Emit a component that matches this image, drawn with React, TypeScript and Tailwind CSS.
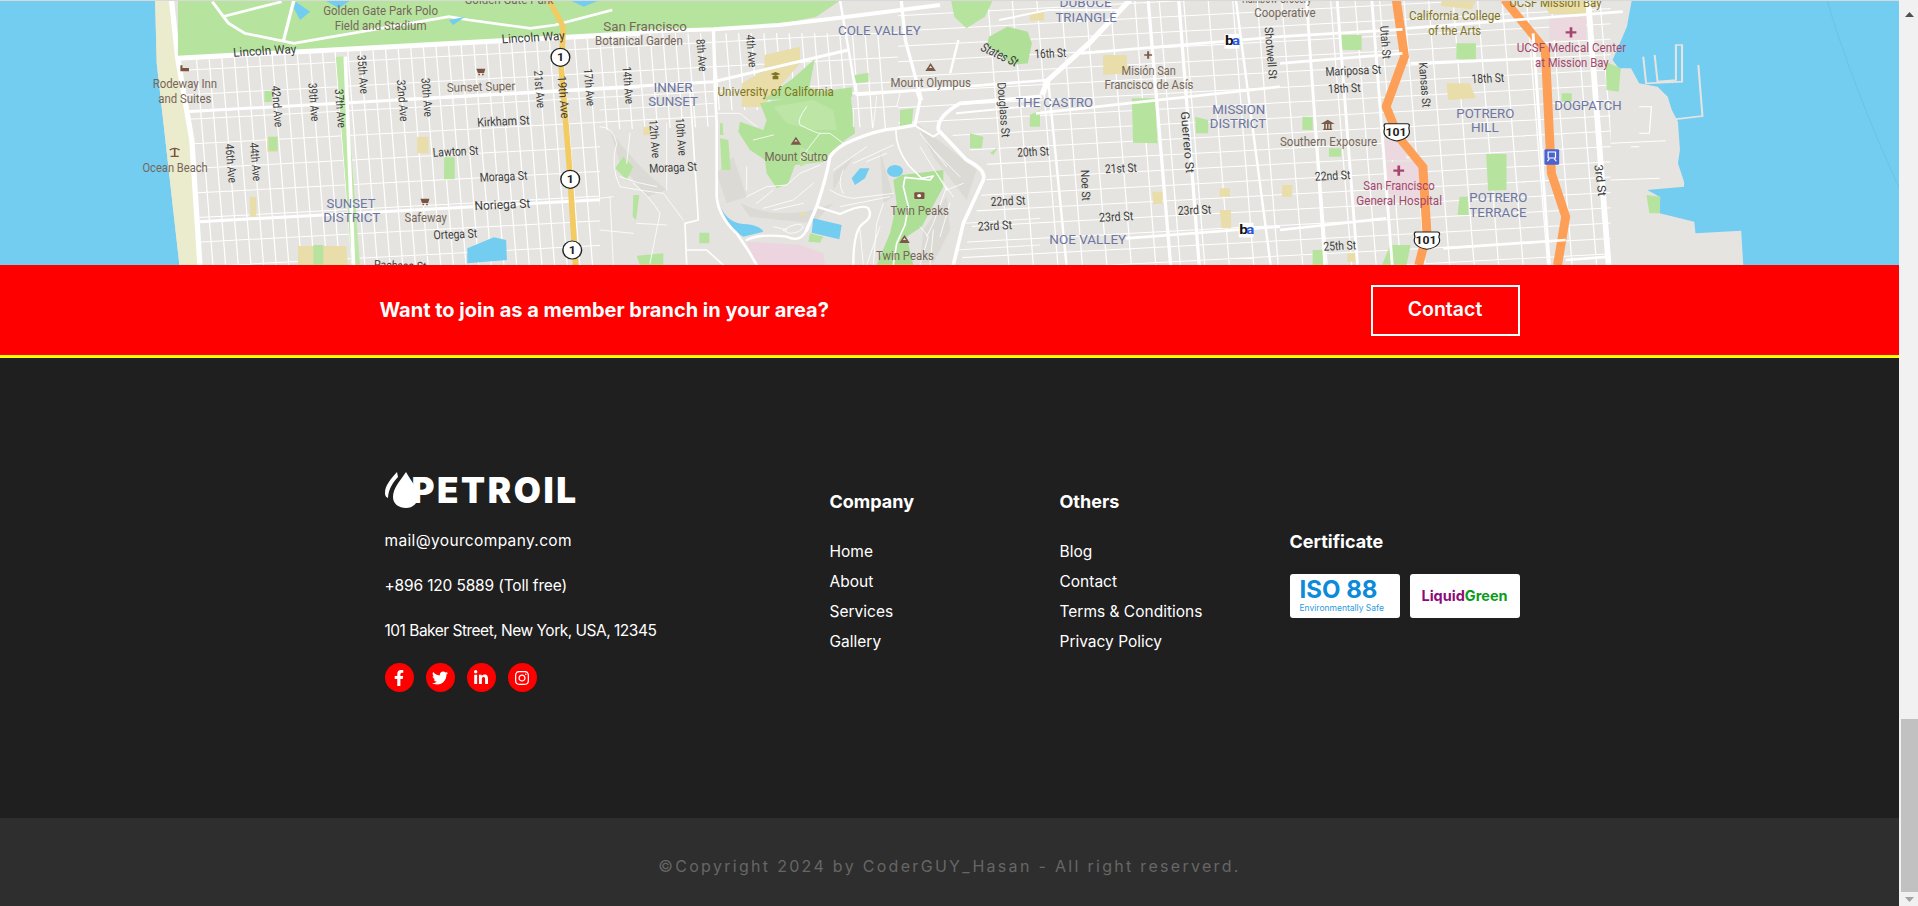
import React from "react";
import { FaFacebookF, FaTwitter, FaLinkedinIn, FaInstagram } from "react-icons/fa";

type L = [string, number, number, number, number?];
const BROWN = "#76675a", DARK = "#3c3c3c", BLUE = "#6d76a3", OLIVE = "#7f7420", MAROON = "#a4476f";
const MAPFONT = "'Liberation Sans Narrow','Roboto',sans-serif";

const g1: Record<string, L[]> = {
  [BROWN]: [["Golden Gate Park Polo",792,46,281],["Field and Stadium",820,89,225],["Golden Gate Park",1138,12,218],["Rodeway Inn",374,265,158],["and Suites",388,308,130],["Ocean Beach",349,515,160],["Sunset Super",1095,276,168,-2],["Safeway",991,666,104],["San Francisco",1478,92,205],["Botanical Garden",1458,135,215]],
  [DARK]: [["Lincoln Way",572,170,155,-4],["Lincoln Way",1230,130,155,-4],["Kirkham St",1170,380,128,-3],["Lawton St",1061,470,112,-3],["Moraga St",1176,545,117,-3],["Noriega St",1163,630,137,-3],["Ortega St",1063,718,107,-3],["Pacheco St",916,806,128,3],["42nd Ave",665,258,124,86],["39th Ave",755,250,115,86],["37th Ave",820,268,116,86],["35th Ave",875,166,116,86],["32nd Ave",972,240,125,86],["30th Ave",1032,235,116,86],["21st Ave",1308,212,113,86],["19th Ave",1366,228,128,86],["17th Ave",1430,206,113,86],["14th Ave",1525,200,113,86],["46th Ave",552,432,118,86],["44th Ave",612,428,116,86]],
  [BLUE]: [["SUNSET",800,624,120],["DISTRICT",792,667,140]],
};
const g2: Record<string, L[]> = {
  [BROWN]: [["Mount Olympus",614,262,197],["Mount Sutro",305,482,155],["Twin Peaks",614,644,143],["Twin Peaks",578,780,142],["Misión San",1180,224,133],["Francisco de Asís",1138,267,218],["Rainbow Grocery",1475,10,170],["Cooperative",1505,50,150]],
  [DARK]: [["States St",832,150,100,30],["16th St",967,175,78,-3],["Douglass St",875,248,165,86],["8th Ave",138,118,97,86],["4th Ave",260,105,98,86],["12th Ave",22,360,115,86],["10th Ave",87,355,113,86],["Moraga St",23,518,117,-3],["20th St",925,470,78,-3],["21st St",1140,520,78,-3],["22nd St",860,618,85,-3],["23rd St",828,692,84,-3],["23rd St",1125,665,84,-3],["23rd St",1318,645,82,-3],["Noe St",1080,510,93,88],["Guerrero St",1325,335,185,86],["Shotwell St",1530,82,157,86]],
  [BLUE]: [["COLE VALLEY",485,104,203],["DUBOCE",1028,22,128],["TRIANGLE",1018,66,150],["INNER",33,275,96],["SUNSET",20,317,122],["THE CASTRO",920,322,190],["MISSION",1402,342,130],["DISTRICT",1396,385,138],["NOE VALLEY",1003,733,188]],
  [OLIVE]: [["University of California",190,288,285]],
};
const g3: Record<string, L[]> = {
  [BROWN]: [["Southern Exposure",0,438,238]],
  [DARK]: [["Utah St",245,78,100,86],["Kansas St",340,188,135,86],["Mariposa St",112,228,137,-3],["18th St",118,280,80,-3],["18th St",470,250,80,-3],["22nd St",86,542,87,-3],["3rd St",770,495,95,84],["25th St",107,752,80,-3]],
  [BLUE]: [["POTRERO",432,354,142],["HILL",468,397,68],["DOGPATCH",672,329,165],["POTRERO",464,607,142],["TERRACE",464,650,140]],
  [OLIVE]: [["California College",316,60,224],["of the Arts",363,104,130],["UCSF Mission Bay",562,20,226]],
  [MAROON]: [["UCSF Medical Center",580,156,268],["at Mission Bay",625,200,180],["San Francisco",204,570,175],["General Hospital",187,614,210]],
};

function Labels({ data }: { data: Record<string, L[]> }) {
  return (
    <>
      {Object.entries(data).flatMap(([c, items]) =>
        items.map(([t, x, y, w, r], i) => (
          <text key={c + i} x={x} y={y} fill={c} fontSize={r && Math.abs(r) > 45 ? 29 : 37} textLength={w} lengthAdjust="spacingAndGlyphs" transform={r ? `rotate(${r} ${x} ${y})` : undefined} style={{ fontFamily: MAPFONT }}>
            {t}
          </text>
        ))
      )}
    </>
  );
}

function Route1({ x, y }: { x: number; y: number }) {
  return (
    <g>
      <ellipse cx={x} cy={y} rx={23} ry={27} fill="#fff" stroke="#222" strokeWidth={3.5} />
      <text x={x} y={y + 11} textAnchor="middle" fontSize={30} fontWeight={700} fill="#222" style={{ fontFamily: MAPFONT }}>1</text>
    </g>
  );
}
function Shield({ x, y }: { x: number; y: number }) {
  return (
    <g>
      <path d={`M${x - 28} ${y - 26} h56 q5 0 5 6 q-3 8 0 16 q2 22 -31 30 q-33 -8 -31 -30 q3 -8 0 -16 q0 -6 5 -6z`} fill="#fff" stroke="#222" strokeWidth={3} />
      <text x={x} y={y + 11} textAnchor="middle" fontSize={30} fontWeight={700} fill="#222" style={{ fontFamily: MAPFONT }}>101</text>
    </g>
  );
}
function Bart({ x, y }: { x: number; y: number }) {
  return (
    <g>
      <rect x={x - 18} y={y - 22} width={36} height={44} fill="#fff" />
      <text x={x - 17} y={y + 12} fontSize={38} fontWeight={700} fill="#111" style={{ fontFamily: MAPFONT }}>b</text>
      <text x={x} y={y + 12} fontSize={38} fontWeight={700} fill="#2f56d8" style={{ fontFamily: MAPFONT }}>a</text>
    </g>
  );
}
const Cross = ({ x, y, c, s = 1 }: { x: number; y: number; c: string; s?: number }) => (
  <path d={`M${x - 12 * s} ${y}h${24 * s}M${x} ${y - 14 * s}v${28 * s}`} stroke={c} strokeWidth={6 * s} fill="none" />
);
const Peak = ({ x, y }: { x: number; y: number }) => (
  <g>
    <path d={`M${x} ${y - 13}l13 24h-26z`} fill="#7b5a48" />
    <path d={`M${x} ${y - 4}l4 6-4-1-4 1z`} fill="#fff" />
  </g>
);
const Cart = ({ x, y }: { x: number; y: number }) => (
  <path d={`M${x - 11} ${y - 9}h22l-3 13h-15zM${x - 6} ${y + 6}h4v5h-4zM${x + 3} ${y + 6}h4v5h-4z`} fill="#7b5340" />
);

const hLines = (x0: number, x1: number, y0: number, y1: number, step: number) => {
  const out: string[] = [];
  for (let b = y0; b < y1; b += step) out.push(`M${x0} ${b - 0.065 * x0}L${x1} ${b - 0.065 * x1}`);
  return out.join("");
};
const vLines = (x0: number, x1: number, yt: number, yb: number, step: number) => {
  const out: string[] = [];
  for (let a = x0; a < x1; a += step) out.push(`M${a + 0.065 * yt} ${yt}L${a + 0.065 * yb} ${yb}`);
  return out.join("");
};

function Hills() {
  return (
    <g transform="translate(600 90) scale(0.33333)" fill="none" strokeLinejoin="round" strokeLinecap="round">
      <path d="M0 120L340 110L350 60L480 60L760 110L880 120L950 110L1050 130L1170 230L1080 525L0 525Z" fill="#e4e3df" />
      <path d="M420 340Q550 400 700 340L640 400L450 380Z M30 120Q100 220 200 300L140 320L60 220Z M350 250L380 340L440 320L400 200Z M950 100L1130 240L1100 330L1000 200Z M700 250L760 200L700 300Z M840 180L880 320L850 340Z M970 420L1040 320L1050 420L1000 520H960Z" fill="#dcdad5" />
      <path d="M480 40L690 0H750L765 130L735 150L690 190L670 215L585 225L565 280L530 295L500 250L495 210L450 180L415 125L420 95L490 120L500 90Z" fill="#b2e199" />
      <path d="M520 50L640 30L700 60L710 120L640 120L560 100Z M600 230L670 200L600 170Z" fill="#bde6a6" />
      <path d="M360 145L385 150L392 240L365 240Z M45 235L70 200L100 230L80 270Z M100 315L118 315L108 390L98 380Z M298 428H328V460H298Z M110 497L190 490V525H120Z M900 60L940 55L935 105L900 115Z M1110 130L1150 140L1145 175L1110 175Z M1170 190L1195 170L1180 195Z M630 430L670 440L660 458L625 455Z M360 100L368 100L370 135L360 135Z" fill="#b6e49f" />
      <path d="M880 270L905 255L1030 240L1030 290L965 410L920 440L940 525H830L870 430L890 340Z" fill="#aedf96" />
      <path d="M425 25H478V50H425Z M600 365L620 372L615 378L600 375Z M130 110H150V135H130Z" fill="#e9dda9" />
      <path d="M362 352Q385 400 430 402Q480 405 490 425L430 440Q390 420 362 352Z M640 385L725 405L718 448L635 428Z M755 265L780 235L808 235L795 265L765 285Z" fill="#72cdf1" />
      <ellipse cx="885" cy="243" rx="24" ry="18" fill="#72cdf1" />
      <path d="M440 455L600 465L670 490L675 525H470Z" fill="#ecd5df" />

      <g stroke="#fff" strokeWidth={2.5}>
        <path d="M0 110Q40 110 50 160Q30 230 60 290Q110 300 190 310L250 390M0 325L40 320M60 260Q110 280 170 290M100 280Q150 320 180 370L150 520M0 420L100 430M30 320L40 525M110 400L200 405M200 100L200 300M90 130L80 220" />
        <path d="M0 60L340 40M350 70L420 70L470 110" />
        <path d="M620 50Q590 90 600 105Q650 130 660 130H690L730 160M660 130Q620 180 600 210M460 150L520 135" />
        <path d="M440 320L500 290L560 285L600 250L660 225M470 340L520 300M490 355L580 330L640 280M520 360L610 340M550 420Q600 390 610 410Q600 430 570 430ZM520 410L560 420" />
        <path d="M700 240L800 170M760 220L880 165M800 215L860 190M690 300Q720 320 760 325L880 310M720 350L870 320M730 240Q710 280 730 310" />
        <path d="M960 130L1040 230M1000 180L1080 260M960 170L1040 300M1040 290L1000 400L980 440M1090 280L1040 300M1050 340L1020 440M1010 250L1060 320" />
        <path d="M850 340L830 400L820 525M840 410L800 525M780 420L790 525M960 410L985 440L960 525M1000 420L990 525" />
        <path d="M1090 400L1320 385M1070 480L1320 465" />
        <path d="M440 230L440 300M760 60V110M830 20L820 110M900 10L890 50" />
      </g>
      <g stroke="#fff">
        <path d="M345 0L350 100V320Q355 380 410 430L450 490L470 525" strokeWidth={8} />
        <path d="M440 450Q480 430 560 440Q600 460 620 420L650 350L720 372Q790 340 805 355Q820 380 790 400Q760 420 760 525" strokeWidth={7} />
        <path d="M620 420L650 350Q680 260 690 200Q710 170 760 150Q830 120 890 115L945 105L960 30L950 0" strokeWidth={10} />
        <path d="M888 115Q885 170 925 225L965 265L1000 258L990 270L915 262L910 290L925 350L915 405L890 460L880 525" strokeWidth={5} />
        <path d="M1320 20L1080 40Q1010 80 1015 120L1100 210Q1160 240 1150 270L1090 400L1060 525" strokeWidth={11} />
        <path d="M1070 70L1320 45M950 110L1000 140L1015 130M760 10L960 0" strokeWidth={6} />
        <path d="M270 0L295 390L255 400L260 525" strokeWidth={5} />
        <path d="M260 480H320L370 525" strokeWidth={5} />
      </g>
    </g>
  );
}

function MapArt() {
  return (
    <svg viewBox="0 0 1899 265" className="block w-full h-[265px] shrink-0" preserveAspectRatio="none">
      <rect width="1899" height="265" fill="#e5e4e0" />
      <g transform="scale(0.40816 0.33333)">
        <path d={hLines(450, 2200, 240, 1000, 74) + vLines(470, 2150, 100, 800, 31)} stroke="#fff" strokeWidth={3} fill="none" />
        <path d={hLines(2200, 3950, 190, 1100, 46) + vLines(2420, 3950, 0, 800, 60)} stroke="#fff" strokeWidth={3} fill="none" />

        <path d="M0 0H380L384 190L440 800H0Z" fill="#72cdf1" />
        <path d="M380 0H420L445 180L470 400L495 800H440L384 190Z" fill="#ebebcd" />
        <path d="M420 0L436 180L470 420L490 800" stroke="#fff" strokeWidth={13} fill="none" />

        <path d="M436 0H2060L2000 50L1900 75L1568 98L436 172Z" fill="#b6e49f" />

        <g transform="translate(1568 0)">
          <path d="M115 0H420L320 45L125 72Z" fill="#b6e49f" />
          <path d="M0 0H100L105 75L0 82Z" fill="#b6e49f" />
          <path d="M762 0H865L845 50L800 85L770 50Z" fill="#b6e49f" />
          <path d="M855 110L900 80L950 95L960 130L950 190L910 195L890 170L850 135Z" fill="#b0df98" />
          <path d="M305 165L392 140L392 190L300 320L250 320L250 250L305 210Z" fill="#e9dda9" />
          <path d="M428 178L415 262L440 275L520 262V290L300 300L370 240Z" fill="#b2e199" />
          <path d="M525 225L560 218V245L530 250Z M1205 295L1262 295L1268 430L1208 428Z M1360 350L1392 360V400H1362Z M955 345L980 330V380H955Z" fill="#b6e49f" />
          <path d="M1135 165H1192L1195 220L1135 225Z M955 35H990V62H955Z" fill="#e9dda9" />
          <path d="M1420 630H1448V685H1425Z M1420 565H1445V590H1420Z M1255 575H1280V612H1258Z" fill="#e9dda9" />
          <path d="M0 95L180 88L340 75L480 55L735 15" stroke="#fff" strokeWidth={12} fill="none" />
          <path d="M-600 300L0 258L180 245L510 150" stroke="#fff" strokeWidth={9} fill="none" />
          <path d="M530 285L1000 240" stroke="#fff" strokeWidth={8} fill="none" />
          <path d="M1200 0L1100 130L1000 240L985 285" stroke="#fff" strokeWidth={14} fill="none" strokeLinejoin="round" />
          <path d="M690 300L650 120L640 0M180 90L185 300" stroke="#fff" strokeWidth={8} fill="none" />
          <path d="M490 0L530 285M780 120L760 220M880 60L1000 30H1180M1000 240L1045 795" stroke="#fff" strokeWidth={6} fill="none" />
          <path d="M1245 0L1300 795M1320 0L1370 795M1080 160L1568 110M970 340L1568 260M1190 715L1568 680" stroke="#fff" strokeWidth={8} fill="none" />
          <path d="M1460 0L1545 795" stroke="#fff" strokeWidth={6} fill="none" />
        </g>

        <path d="M435 175L1568 100" stroke="#fff" strokeWidth={15} fill="none" />
        <path d="M455 335L1568 260" stroke="#fff" strokeWidth={9} fill="none" />
        <path d="M490 665L1490 598" stroke="#fff" strokeWidth={9} fill="none" />
        <path d="M833 170L872 795" stroke="#bfe7a8" strokeWidth={20} fill="none" />
        <path d="M846 170L866 795" stroke="#fff" strokeWidth={9} fill="none" />
        <path d="M520 5L560 70L600 100L720 130L1100 50L1150 60L1300 85L1360 75L1500 30M720 0L695 120M545 50L690 5" stroke="#fff" strokeWidth={8} fill="none" />
        <path d="M725 5L760 35L735 60L720 25Z M795 0H860L830 25Z M1395 0H1470L1430 20Z M1100 60L1140 50L1110 75Z" fill="#72cdf1" />
        <path d="M1145 745L1210 712L1240 720L1242 780L1145 790Z" fill="#72cdf1" />
        <path d="M730 738H848L852 795H730Z M612 590H628V650H612Z M1022 410H1050V460H1022Z M655 410H680V456H655Z" fill="#e9dda9" />
        <path d="M768 735H792V795H768Z M1088 472H1114V538H1088Z M658 410H680V452H658Z M648 272H666V306H648Z" fill="#b6e49f" />
        <path d="M1345 0L1380 80L1375 200L1395 500L1410 795" stroke="#f2cb62" strokeWidth={14} fill="none" />

        <g transform="translate(3136 0)">
          <path d="M810 0H862L850 80L815 180L830 205L860 205L880 250L925 260L950 290L960 330L975 365L980 450L975 490L990 545L990 560L900 570L930 590L930 640L1015 665L1018 700L1130 692L1135 795H810Z" fill="#e5e4e0" />
          <path d="M810 430L945 422M810 540L930 535M860 440L880 440M880 320L910 320L905 400L880 400" stroke="#fff" strokeWidth={3} fill="none" />
          <path d="M862 0H1521V795H1135L1130 692L1018 700L1015 665L930 640L930 590L900 570L990 560L990 545L975 490L980 450L975 365L960 330L950 290L925 260L880 250L860 205L830 205L815 180L850 80Z" fill="#72cdf1" />
          <path d="M1340 0Q1400 250 1521 575" stroke="#67bfe2" strokeWidth={2} fill="none" />
          <path d="M890 170L897 250L985 245V135H970V240L925 245L918 165M1025 195L1035 348L965 358" stroke="#e5e4e0" strokeWidth={5} fill="none" />
          <path d="M798 185L835 205L830 275L800 270Z M898 585L932 590L930 640H905Z" fill="#b6e49f" />
          <path d="M660 50H750V120H660Z M255 420L305 420L310 480H255Z M258 485L340 485L345 600L260 580Z" fill="#ecd9e0" />
          <path d="M150 105H200V150H150Z M432 130H480V178H432Z M505 462H555V570L510 572Z M120 445H150V470H120Z M690 280H715V305H690Z M440 590L460 590L462 645L435 645Z M270 735H320L310 795H250Z M80 750H105V795H80Z M55 350H80V390H55Z" fill="#b6e49f" />
          <path d="M408 250H465L480 295L412 300Z M395 0H480L470 28L395 18Z M640 0H780L750 42H660Z M5 555H30V590H5Z M165 760H185V785H165Z" fill="#e9dda9" />
          <path d="M285 0L305 170L260 320L290 410L350 500L360 700L340 795" stroke="#fd9f57" strokeWidth={22} fill="none" />
          <path d="M550 0L650 150L660 400L665 520L700 650L680 795" stroke="#fd9f57" strokeWidth={22} fill="none" />
          <path d="M0 110L300 88M310 85L840 35M0 190L300 160M320 190L640 175M0 690L260 655M400 745L700 720M700 780L810 770" stroke="#fff" strokeWidth={8} fill="none" />
          <path d="M65 0L110 795M140 0L190 795M225 0L275 795M620 100L660 795" stroke="#fff" strokeWidth={7} fill="none" />
          <path d="M755 0L805 795" stroke="#fff" strokeWidth={14} fill="none" />
          <Cross x={713} y={97} c="#a4476f" s={1.1} />
          <Cross x={291} y={512} c="#a4476f" s={1.1} />
          <rect x="648" y="448" width="36" height="46" rx="3" fill="#4b63cf" />
          <path d="M657 456h18v18h-18zM655 484l5-8M677 484l-5-8" stroke="#fff" strokeWidth={3} fill="none" />
          <path d="M106 388h22M106 370h22l-11 -8zM110 372v14M124 372v14M117 372v14" stroke="#7b5a48" strokeWidth={4} fill="#7b5a48" />
          <Shield x={284} y={397} />
          <Shield x={358} y={722} />
          <Labels data={g3} />
        </g>
      </g>

      <Hills />

      <g transform="scale(0.40816 0.33333)">
        <g transform="translate(1568 0)">
          <path d="M320 222l12-6 12 6-12 6zM325 228h14v10h-14z" fill="#7f7420" />
          <rect x="672" y="577" width="25" height="20" rx="3" fill="#7b5340" />
          <circle cx="684" cy="587" r="5" fill="#fff" />
          <Peak x={712} y={202} />
          <Peak x={382} y={423} />
          <Peak x={648} y={718} />
          <Cross x={1245} y={165} c="#7b5a48" s={0.8} />
          <Bart x={1450} y={124} />
          <Bart x={1485} y={690} />
          <Labels data={g2} />
        </g>
        <Cart x={1178} y={215} />
        <Cart x={1041} y={605} />
        <path d="M442 196h5v8h16v10h-21z" fill="#7b5340" />
        <path d="M428 445v24M416 450q12 -10 24 0M418 469h20" stroke="#7b5340" strokeWidth={4} fill="none" />
        <Route1 x={1373} y={172} />
        <Route1 x={1397} y={538} />
        <Route1 x={1402} y={750} />
        <Labels data={g1} />
      </g>
      <rect width="1899" height="1" fill="#d9d9d9" />
    </svg>
  );
}

const company = ["Home", "About", "Services", "Gallery"];
const others = ["Blog", "Contact", "Terms & Conditions", "Privacy Policy"];
const socials = [FaFacebookF, FaTwitter, FaLinkedinIn, FaInstagram];

function LinkCol({ title, items }: { title: string; items: string[] }) {
  return (
    <div className="pt-[18px]">
      <h4 className="text-[18px] leading-[26px] font-bold text-white">{title}</h4>
      <ul className="mt-[22px] flex flex-col">
        {items.map((t) => (
          <li key={t} className="text-[15.5px] leading-[30px] text-white whitespace-nowrap">{t}</li>
        ))}
      </ul>
    </div>
  );
}

function Scrollbar() {
  return (
    <div className="w-[19px] shrink-0 bg-[#f1f1f1] flex flex-col items-end">
      <div className="w-[17px] h-[28px] flex items-center justify-center">
        <svg width="9" height="5" viewBox="0 0 9 5"><path d="M4.5 0L9 5H0Z" fill="#505050" /></svg>
      </div>
      <div className="flex-1" />
      <div className="w-[17px] h-[173px] bg-[#c1c1c1]" />
      <div className="w-[17px] h-[14px] flex items-center justify-center">
        <svg width="9" height="5" viewBox="0 0 9 5"><path d="M4.5 5L9 0H0Z" fill="#a3a3a3" /></svg>
      </div>
    </div>
  );
}

export default function App() {
  return (
    <div className="h-[906px] w-full flex overflow-hidden bg-[#f1f1f1] font-['Inter',sans-serif]">
      <main className="flex-1 min-w-0 flex flex-col">
        <MapArt />
        <section className="h-[93px] shrink-0 bg-[#ff0000] border-b-[3px] border-[#ffff00]">
          <div className="w-[1140px] mx-auto h-[90px] flex items-center justify-between">
            <h3 className="text-[20px] font-bold text-white">Want to join as a member branch in your area?</h3>
            <button className="w-[149px] h-[51px] border-2 border-white text-white text-[19.5px] font-semibold">Contact</button>
          </div>
        </section>
        <footer className="h-[460px] shrink-0 bg-[#1f1f1f]">
          <div className="w-[1140px] mx-auto pl-[5px] pt-[113px] grid grid-cols-[445px_230px_230px_230px]">
            <div>
              <div className="flex items-center h-[38px] text-white">
                <svg width="34" height="38" viewBox="0 0 34 38" className="shrink-0">
                  <path d="M12 1C6 8 0 14 0 22c0 3 1 4 3 5C3 18 9 10 13 6Z" fill="#fff" />
                  <path d="M21 1C15 10 8 17 8 26c0 7 6 11 13 11s12-5 12-11C33 17 26 10 21 1Z" fill="#fff" />
                </svg>
                <span className="text-[35px] leading-none font-black tracking-[2.6px] -ml-[7px]">PETROIL</span>
              </div>
              <p className="mt-[19px] text-[15.5px] tracking-[0.35px] leading-[26px] text-white">mail@yourcompany.com</p>
              <p className="mt-[19px] text-[15.5px] tracking-[-0.16px] leading-[26px] text-white">+896 120 5889 (Toll free)</p>
              <p className="mt-[19px] text-[15.5px] tracking-[-0.5px] leading-[26px] text-white">101 Baker Street, New York, USA, 12345</p>
              <div className="mt-[19px] flex gap-[12px]">
                {socials.map((Icon, i) => (
                  <span key={i} className="w-[29px] h-[29px] rounded-full bg-[#ff0000] text-white flex items-center justify-center text-[16px]">
                    <Icon />
                  </span>
                ))}
              </div>
            </div>
            <LinkCol title="Company" items={company} />
            <LinkCol title="Others" items={others} />
            <div className="pt-[58px]">
              <h4 className="text-[18px] leading-[26px] font-bold text-white">Certificate</h4>
              <div className="mt-[19px] flex gap-[10px]">
                <div className="w-[110px] h-[44px] bg-white rounded-[3px] pl-[10px] pt-[3px]">
                  <div className="text-[24px] leading-[26px] font-bold text-[#0d8bd9]">ISO 88</div>
                  <div className="text-[8.5px] leading-[10px] text-[#2b9be0] whitespace-nowrap">Environmentally Safe</div>
                </div>
                <div className="w-[110px] h-[44px] bg-white rounded-[3px] flex items-center justify-center text-[14.5px] font-bold">
                  <span className="text-[#8c0a7c]">Liquid</span><span className="text-[#0c9b1c]">Green</span>
                </div>
              </div>
            </div>
          </div>
        </footer>
        <div className="flex-1 bg-[#2e2e2e] flex items-center justify-center pt-[8px]">
          <p className="text-[16px] tracking-[2.3px] text-[#666666]">©Copyright 2024 by CoderGUY_Hasan - All right reserverd.</p>
        </div>
      </main>
      <Scrollbar />
    </div>
  );
}
